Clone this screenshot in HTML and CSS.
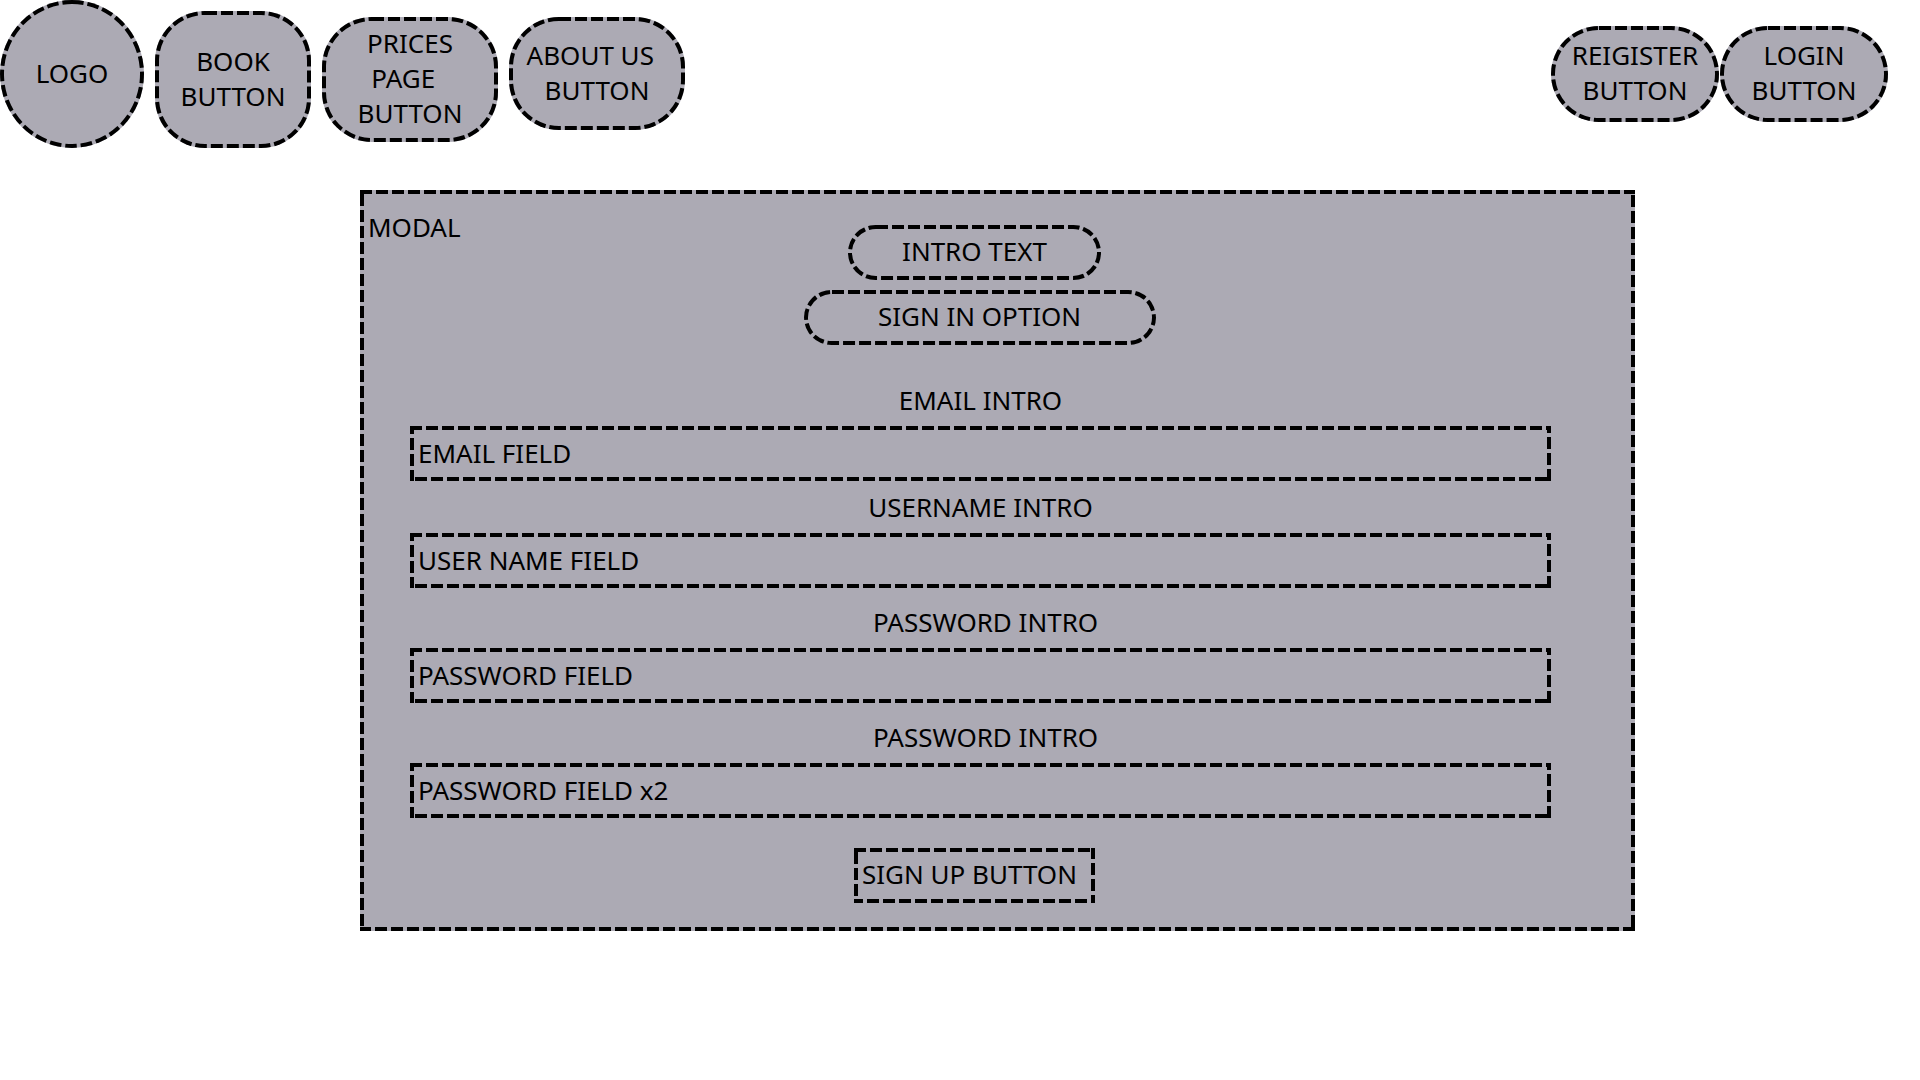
FILE: index.html
```html
<!DOCTYPE html>
<html lang="en">
<head>
<meta charset="utf-8">
<title>Sign up wireframe</title>
<link rel="stylesheet" href="styles.css">
</head>
<body>
<header class="topbar">
  <nav class="nav">
    <a class="shape logo" href="#"><svg class="outline" aria-hidden="true"><rect width="100%" height="100%" rx="50%" ry="50%"/></svg>LOGO</a>
    <button class="shape pill book" type="button"><svg class="outline" aria-hidden="true"><rect width="100%" height="100%" rx="50"/></svg>BOOK<br>BUTTON</button>
    <button class="shape pill prices" type="button"><svg class="outline" aria-hidden="true"><rect width="100%" height="100%" rx="50"/></svg>PRICES<br>PAGE&nbsp;&nbsp;<br>BUTTON</button>
    <button class="shape pill about" type="button"><svg class="outline" aria-hidden="true"><rect width="100%" height="100%" rx="50"/></svg>ABOUT US&nbsp;&nbsp;<br>BUTTON</button>
  </nav>
  <div class="account">
    <button class="shape pill session" type="button"><svg class="outline" aria-hidden="true"><rect width="100%" height="100%" rx="48"/></svg>REIGISTER<br>BUTTON</button>
    <button class="shape pill session" type="button"><svg class="outline" aria-hidden="true"><rect width="100%" height="100%" rx="48"/></svg>LOGIN<br>BUTTON</button>
  </div>
</header>
<main class="modal">
  <svg class="outline" aria-hidden="true"><rect width="100%" height="100%"/></svg>
  <h1 class="modal-title">MODAL</h1>
  <form class="form">
    <p class="box capsule intro"><svg class="outline" aria-hidden="true"><rect width="100%" height="100%" rx="28"/></svg>INTRO TEXT</p>
    <a class="box capsule signin" href="#"><svg class="outline" aria-hidden="true"><rect width="100%" height="100%" rx="28"/></svg>SIGN IN OPTION</a>
    <div class="field email">
      <label for="email">EMAIL INTRO</label>
      <div class="box"><svg class="outline" aria-hidden="true"><rect width="100%" height="100%"/></svg><input id="email" type="email" placeholder="EMAIL FIELD"></div>
    </div>
    <div class="field username">
      <label for="username">USERNAME INTRO</label>
      <div class="box"><svg class="outline" aria-hidden="true"><rect width="100%" height="100%"/></svg><input id="username" type="text" placeholder="USER NAME FIELD"></div>
    </div>
    <div class="field password">
      <label for="password">PASSWORD INTRO</label>
      <div class="box"><svg class="outline" aria-hidden="true"><rect width="100%" height="100%"/></svg><input id="password" type="password" placeholder="PASSWORD FIELD"></div>
    </div>
    <div class="field password">
      <label for="password2">PASSWORD INTRO</label>
      <div class="box"><svg class="outline" aria-hidden="true"><rect width="100%" height="100%"/></svg><input id="password2" type="password" placeholder="PASSWORD FIELD x2"></div>
    </div>
    <button class="box submit" type="submit"><svg class="outline" aria-hidden="true"><rect width="100%" height="100%"/></svg>SIGN UP BUTTON</button>
  </form>
</main>
</body>
</html>
```
FILE: styles.css
```css
* { box-sizing: border-box; }

body {
  margin: 0;
  background: #fff;
  color: #000;
  font: 400 26px/35px "Noto Sans", "Open Sans", sans-serif;
}

button, input {
  margin: 0;
  padding: 0;
  border: 0;
  background: transparent;
  color: inherit;
  font: inherit;
}

a { color: inherit; text-decoration: none; }

/* Dashed outline: the outer half of the stroke is clipped away */
.outline {
  position: absolute;
  inset: 0;
  width: 100%;
  height: 100%;
  overflow: hidden;
  border-radius: inherit;
  pointer-events: none;
}

.outline rect {
  fill: none;
  stroke: #000;
  stroke-width: 8;
  stroke-dasharray: 12 4;
}

.topbar {
  display: flex;
  justify-content: space-between;
  align-items: flex-start;
  padding-right: 32px;
}

.nav { display: flex; align-items: flex-start; gap: 11px; }
.account { display: flex; gap: 1px; padding-top: 26px; }

.shape {
  position: relative;
  padding-bottom: 2px;
  background: #acaab4;
  text-align: center;
  white-space: nowrap;
}

.logo {
  display: flex;
  align-items: center;
  justify-content: center;
  width: 144px;
  height: 148px;
  border-radius: 50%;
}

.pill { border-radius: 50px; }
.book { width: 156px; height: 137px; margin-top: 11px; }
.prices { width: 176px; height: 125px; margin-top: 17px; }
.about { width: 176px; height: 113px; margin-top: 17px; }
.session { width: 168px; height: 96px; border-radius: 48px; }

.modal {
  position: relative;
  display: grid;
  margin: 42px 285px 0 360px;
  padding: 0 84px 28px 50px;
  background: #acaab4;
}

.modal-title {
  grid-area: 1 / 1;
  justify-self: start;
  margin: 20px 0 0 -42px;
  font-size: 26px;
  font-weight: 400;
}

.form {
  grid-area: 1 / 1;
  display: flex;
  flex-direction: column;
  align-items: center;
  padding-top: 35px;
}

.box {
  position: relative;
  display: flex;
  align-items: center;
  justify-content: center;
  height: 55px;
  margin: 0;
  padding-bottom: 2px;
}

.capsule { border-radius: 28px; }
.intro { width: 253px; margin-right: 12px; }
.signin { width: 352px; margin: 10px 2px 0 0; }

.field {
  display: flex;
  flex-direction: column;
  gap: 8px;
  width: 100%;
  margin-top: 17px;
  text-align: center;
}

.email { margin-top: 38px; }
.username { margin-top: 9px; }
.password label { padding-left: 10px; }

.field input {
  width: 100%;
  height: 100%;
  padding: 0 8px;
  outline: 0;
}

.field input::placeholder { color: #000; opacity: 1; }

.submit {
  justify-content: flex-start;
  width: 241px;
  margin: 30px 12px 0 0;
  padding-left: 8px;
}
```
